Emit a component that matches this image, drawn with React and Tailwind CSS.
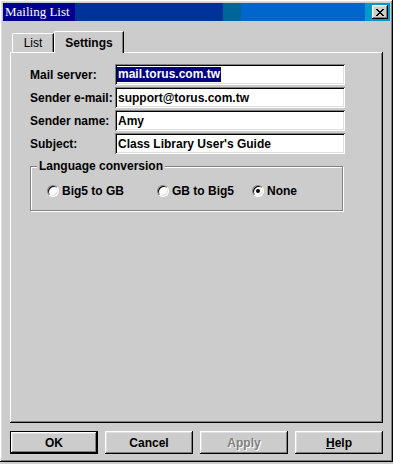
const raised =
  'shadow-[inset_-1px_-1px_#000,inset_1px_1px_#fff,inset_-2px_-2px_#808080,inset_2px_2px_#dfdfdf]'
const sunken =
  'shadow-[inset_1px_1px_#808080,inset_-1px_-1px_#fff,inset_2px_2px_#000,inset_-2px_-2px_#dfdfdf]'

function Field({ label, value, selected }) {
  return (
    <div className="flex items-center h-[21px]">
      <span className="w-[85px] shrink-0">{label}</span>
      <div className={`w-[230px] h-[21px] bg-white flex items-center pl-[2px] ${sunken}`}>
        {selected ? (
          <span className="bg-[#000080] text-white leading-[15px] px-px">{value}</span>
        ) : (
          <span className="px-px">{value}</span>
        )}
      </div>
    </div>
  )
}

function Radio({ label, checked, className = '' }) {
  return (
    <div className={`flex items-center gap-[3px] ${className}`}>
      <div className="w-[12px] h-[12px] rounded-full bg-white border border-t-[#808080] border-l-[#808080] border-b-white border-r-white flex items-center justify-center shadow-[inset_1px_1px_#000,inset_-1px_-1px_#dfdfdf]">
        {checked && <div className="w-[4px] h-[4px] rounded-full bg-black" />}
      </div>
      <span>{label}</span>
    </div>
  )
}

function Button({ children, isDefault, disabled }) {
  return (
    <div
      className={`w-[88px] h-[23px] flex items-center justify-center font-bold ${
        isDefault ? 'border border-black' : ''
      }`}
    >
      <div className={`w-full h-full flex items-center justify-center ${raised}`}>
        <span className={disabled ? 'text-[#808080] [text-shadow:1px_1px_#fff]' : ''}>{children}</span>
      </div>
    </div>
  )
}

export default function App() {
  return (
    <div className="w-[393px] h-[464px] bg-[#cccccc] font-['Liberation_Sans',Arial,sans-serif] text-[12px] text-black">
      <div className={`w-[393px] h-[462px] p-[3px] flex flex-col ${raised}`}>
        {/* title bar */}
        <div className="h-[18px] flex items-stretch relative shrink-0">
          <div className="w-[72px] bg-[#00008f]" />
          <div className="w-[148px] bg-[#003399]" />
          <div className="w-[18px] bg-[#006699]" />
          <div className="w-[124px] bg-[#0066cc]" />
          <div className="flex-1 bg-[#0099cc]" />
          <span className="absolute left-[2px] top-0 leading-[18px] text-white font-['Liberation_Serif',serif] text-[13px]">
            Mailing List
          </span>
          <div className={`absolute right-[2px] top-[2px] w-[16px] h-[14px] bg-[#cccccc] flex items-center justify-center ${raised}`}>
            <svg width="8" height="7" viewBox="0 0 8 7" shapeRendering="crispEdges">
              <path
                d="M0 0h2v1H0zM6 0h2v1H6zM1 1h2v1H1zM5 1h2v1H5zM2 2h4v1H2zM3 3h2v1H3zM2 4h4v1H2zM1 5h2v1H1zM5 5h2v1H5zM0 6h2v1H0zM6 6h2v1H6z"
                fill="#000"
              />
            </svg>
          </div>
        </div>

        {/* tabs */}
        <div className="mt-[10px] px-[7px] flex flex-col">
          <div className="h-[21px] flex items-end pl-[2px]">
            <div className="w-[42px] h-[19px] flex items-center justify-center border-l border-t border-white rounded-tl-[2px] shadow-[inset_-1px_0_#808080] border-r border-r-black">
              List
            </div>
            <div className="relative z-10 w-[70px] h-[22px] -mb-px bg-[#cccccc] flex items-center justify-center font-bold border-l border-t border-white rounded-tl-[2px] border-r border-r-black shadow-[inset_-1px_0_#808080]">
              Settings
            </div>
          </div>
          <div
            className={`h-[371px] flex flex-col pl-[20px] pt-[12px] font-bold shadow-[inset_-1px_-1px_#000,inset_1px_1px_#fff,inset_-2px_-2px_#808080]`}
          >
            <div className="flex flex-col gap-[2px]">
              <Field label="Mail server:" value="mail.torus.com.tw" selected />
              <Field label="Sender e-mail:" value="support@torus.com.tw" />
              <Field label="Sender name:" value="Amy" />
              <Field label="Subject:" value="Class Library User's Guide" />
            </div>

            <div className="relative mt-[12px] w-[313px] h-[45px] border border-[#808080] shadow-[1px_1px_#fff,inset_1px_1px_#fff]">
              <span className="absolute -top-[8px] left-[6px] px-[2px] bg-[#cccccc] leading-[14px]">
                Language conversion
              </span>
              <div className="flex items-center h-full pt-[4px] pl-[16px]">
                <Radio label="Big5 to GB" className="w-[110px]" />
                <Radio label="GB to Big5" className="w-[95px]" />
                <Radio label="None" checked />
              </div>
            </div>
          </div>
        </div>

        {/* buttons */}
        <div className="mt-[8px] px-[7px] flex gap-[7px]">
          <Button isDefault>OK</Button>
          <Button>Cancel</Button>
          <Button disabled>Apply</Button>
          <Button>
            <span className="underline">H</span>elp
          </Button>
        </div>
      </div>
    </div>
  )
}
